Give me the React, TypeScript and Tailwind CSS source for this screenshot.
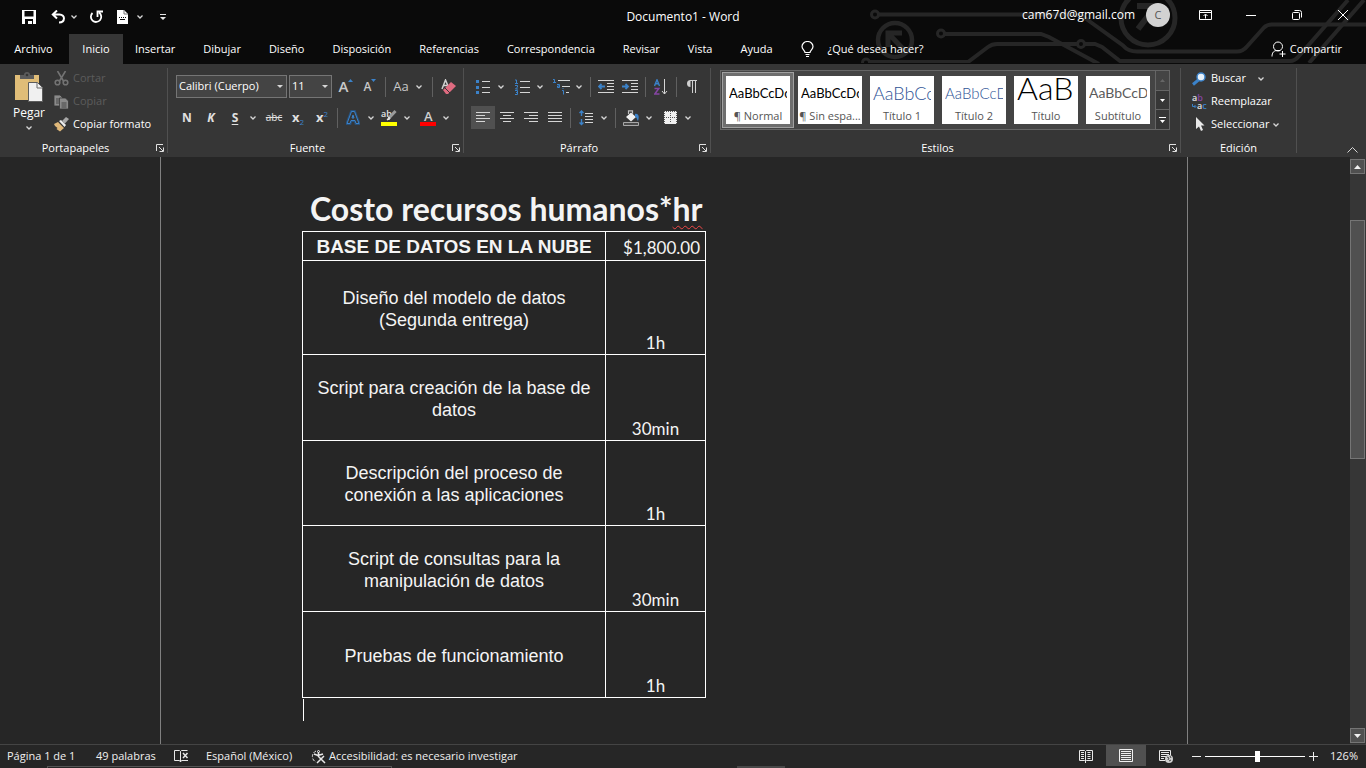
import type { ReactNode } from 'react';
import clsx from 'clsx';

const BLUE = '#3b82c9';
const LIGHT = '#e4e4e4';

interface ToolButtonProps {
  label: string;
  active?: boolean;
  className?: string;
  children: ReactNode;
}

function ToolButton({ label, active, className, children }: ToolButtonProps) {
  return (
    <button
      type="button"
      aria-label={label}
      className={clsx(
        'flex h-[23px] w-6 shrink-0 items-center justify-center hover:bg-[#505050]',
        active && 'bg-[#505050]',
        className,
      )}
    >
      {children}
    </button>
  );
}

function Chevron() {
  return (
    <svg width="6" height="4" viewBox="0 0 6 4" fill="none" stroke="#d6d6d6" strokeWidth="1.300" aria-hidden="true">
      <path d="M.5.5L3 3 5.500.5" />
    </svg>
  );
}

function MenuArrow({ label }: { label: string }) {
  return (
    <button type="button" aria-label={label} className="flex h-[23px] w-3 shrink-0 items-center justify-center">
      <Chevron />
    </button>
  );
}

function Separator() {
  return <span className="mx-[3px] h-5 w-px shrink-0 bg-[#606060]" />;
}

interface GroupProps {
  title: string;
  launcher?: boolean;
  className?: string;
  children: ReactNode;
}

function RibbonGroup({ title, launcher, className, children }: GroupProps) {
  return (
    <section className="flex shrink-0" aria-label={title}>
      <div className={clsx('flex flex-col', className)}>
        <div className="grow">{children}</div>
        <div className="flex h-[18px] items-center">
          <span className="grow text-center leading-[18px]">{title}</span>
          {launcher ? (
            <button type="button" aria-label={`Opciones de ${title}`} className="flex w-4 justify-start pl-[5px]">
              <svg width="8" height="8" viewBox="0 0 8 8" fill="none" stroke="#e0e0e0" aria-hidden="true">
                <path d="M.5 7V.5H7M3 3l4 4M7.500 3.500v4h-4" />
              </svg>
            </button>
          ) : null}
        </div>
      </div>
      <span className="mb-1 mt-1 w-px bg-[#505050]" />
    </section>
  );
}

function HeaderArt() {
  return (
    <svg
      className="pointer-events-none absolute right-0 top-0"
      width="516"
      height="63"
      viewBox="850 0 516 63"
      fill="none"
      stroke="#262626"
      strokeWidth="4"
      aria-hidden="true"
    >
      <circle cx="875" cy="14.500" r="3.500" strokeWidth="3" />
      <path d="M879 14.500h194q8 0 14 5l36 26q5 6 14 6h100q6 0 10-5l17-19q3-3 8-3h94" />
      <circle cx="941" cy="33.500" r="3.500" strokeWidth="3" />
      <path d="M945 34h96l8 3 50 27" />
      <circle cx="866" cy="62.500" r="3.500" strokeWidth="3" />
      <path d="M870 62h98l20-15q4-3 9-3h80" />
      <circle cx="1081" cy="44" r="3.500" strokeWidth="3" />
      <path d="M1085 44h10l7 3 18 14h170q5 0 9-5l49-56M1309 63l55-63" />
      <circle cx="895" cy="40" r="17" strokeWidth="4.500" />
      <path d="M888 47V33h14M888 33l18 19" strokeWidth="5" />
      <circle cx="1148" cy="18" r="27" strokeWidth="5" />
      <path d="M1137 6h19v18M1155 7l-17 22" strokeWidth="6" />
    </svg>
  );
}

function TitleBar() {
  return (
    <div className="relative grid h-[34px] grid-cols-[1fr_auto_1fr] items-start text-white">
      <div className="flex h-[34px] items-center pl-[17px]">
        <button type="button" aria-label="Guardar" className="flex w-6 justify-center">
          <svg width="14" height="14" viewBox="0 0 14 14" aria-hidden="true">
            <path d="M0 0h14v14H0z" fill="#fff" />
            <path d="M2.500 1h9v5.500h-9zM3 9h8v5h-1v-3H6v3H3z" fill="#0a0a0a" />
          </svg>
        </button>
        <button type="button" aria-label="Deshacer" className="ml-[7px] flex w-5 justify-center">
          <svg width="15" height="14" viewBox="0 0 15 14" fill="none" stroke="#fff" strokeWidth="2" aria-hidden="true">
            <path d="M6 .5L1.800 4.500 6 8.500M2 4.500h6.500c6 0 6 8-.500 8" />
          </svg>
        </button>
        <MenuArrow label="Más deshacer" />
        <button type="button" aria-label="Repetir" className="ml-1 flex w-6 justify-center">
          <svg width="14" height="14" viewBox="0 0 14 14" fill="none" stroke="#fff" strokeWidth="1.800" aria-hidden="true">
            <path d="M3.500 3a5.200 5.200 0 1 0 6.500-.500M8.500 7V1.500H14" />
          </svg>
        </button>
        <button type="button" aria-label="Documento" className="ml-1 flex w-5 justify-center">
          <svg width="11" height="14" viewBox="0 0 11 14" aria-hidden="true">
            <path d="M0 0h7l4 4v10H0z" fill="#fff" />
            <path d="M7 0v4h4" fill="none" stroke="#777" />
            <path d="M2 7.500h1m1 0h1m1 0h1m1 0h1M3 9.500h5" stroke="#0a0a0a" />
          </svg>
        </button>
        <span className="ml-[2px]">
          <MenuArrow label="Más documento" />
        </span>
        <button type="button" aria-label="Personalizar barra" className="ml-[5px] flex w-6 justify-center">
          <svg width="6" height="6" viewBox="0 0 6 6" aria-hidden="true">
            <path d="M0 0h6v1H0zM0 3h6L3 6z" fill="#e4e4e4" />
          </svg>
        </button>
      </div>
      <h1 className="whitespace-pre text-xs font-normal leading-[34px]">Documento1 - Word</h1>
      <div className="flex h-[30px] items-center justify-end">
        <span className="text-xs font-normal">cam67d@gmail.com</span>
        <button
          type="button"
          aria-label="Cuenta"
          className="ml-[11px] mr-3 flex size-6 items-center justify-center rounded-full bg-[#d2d2d2] text-[#555]"
        >
          C
        </button>
        <button type="button" aria-label="Presentación de la cinta" className="flex h-full w-[46px] items-center justify-center">
          <svg width="13" height="10" viewBox="0 0 13 10" fill="none" stroke="#fff" aria-hidden="true">
            <path d="M.5.5h12v9H.5zM.5 2.500h12M6.500 8.500v-4M4.500 6l2-2 2 2" />
          </svg>
        </button>
        <button type="button" aria-label="Minimizar" className="flex h-full w-[46px] items-center justify-center">
          <svg width="10" height="1" aria-hidden="true">
            <path d="M0 0h10v1H0z" fill="#fff" />
          </svg>
        </button>
        <button type="button" aria-label="Restaurar" className="flex h-full w-[46px] items-center justify-center">
          <svg width="10" height="10" viewBox="0 0 10 10" fill="none" stroke="#fff" aria-hidden="true">
            <rect x=".5" y="2.500" width="7" height="7" rx="1" />
            <path d="M2.500.5h5q2 0 2 2v5" />
          </svg>
        </button>
        <button type="button" aria-label="Cerrar" className="flex h-full w-[46px] items-center justify-center">
          <svg width="10" height="10" viewBox="0 0 10 10" fill="none" stroke="#fff" aria-hidden="true">
            <path d="M0 0l10 10M10 0L0 10" />
          </svg>
        </button>
      </div>
    </div>
  );
}

const tabs = [
  'Insertar',
  'Dibujar',
  'Diseño',
  'Disposición',
  'Referencias',
  'Correspondencia',
  'Revisar',
  'Vista',
  'Ayuda',
];

function TabBar() {
  return (
    <nav className="relative flex h-[30px] items-stretch text-white" aria-label="Cinta">
      <button type="button" className="w-[69px] pr-[2px]">
        Archivo
      </button>
      <button type="button" className="w-[54px] bg-[#363636] pt-px">
        Inicio
      </button>
      <div className="flex">
        {tabs.map((tab) => (
          <button key={tab} type="button" className="px-[14px] pt-px first:pl-3">
            {tab}
          </button>
        ))}
      </div>
      <button type="button" className="ml-[14px] flex items-center gap-[14px]">
        <svg width="13" height="17" viewBox="0 0 13 17" fill="none" stroke="#fff" strokeWidth="1.200" aria-hidden="true">
          <path d="M4 11.500c0-2-3-3-3-6a5.500 5 0 0 1 11 0c0 3-3 4-3 6zM4.500 13.500h4M5 15.500h3" />
        </svg>
        <span>¿Qué desea hacer?</span>
      </button>
      <button type="button" className="ml-auto mr-6 flex items-center gap-1">
        <svg width="15" height="17" viewBox="0 0 15 17" fill="none" stroke="#fff" aria-hidden="true">
          <circle cx="7" cy="5.500" r="4.500" />
          <path d="M1 15.500c0-4 2-6 5-6h3M11.500 10v6M8.500 13h6" />
        </svg>
        Compartir
      </button>
    </nav>
  );
}

function ClipboardGroup() {
  return (
    <RibbonGroup title="Portapapeles" launcher className="w-[167px]">
      <div className="flex">
        <button type="button" className="ml-1 flex w-[50px] flex-col items-center pt-2">
          <svg width="28" height="30" viewBox="0 0 28 30" aria-hidden="true">
            <path d="M0 3h24v25H0z" fill="#e0bd78" />
            <path d="M5 3h4a3 3 0 0 1 6 0h4v4H5z" fill="#5c5c5c" />
            <circle cx="12" cy="3" r="1.300" fill="#363636" />
            <path d="M13.500 10.500h9l5 5v14h-14z" fill="#f0f0f0" stroke="#5c5c5c" />
            <path d="M22 11v5h5" fill="none" stroke="#6a6a6a" />
          </svg>
          <span className="mt-[3px] text-xs leading-4">Pegar</span>
          <span className="mt-[5px]">
            <Chevron />
          </span>
        </button>
        <div className="flex flex-col pt-[3px]">
          <button type="button" disabled className="flex h-[23px] items-center gap-1 text-[#5c5c5c]">
            <svg width="15" height="15" viewBox="0 0 15 15" fill="none" stroke="#737373" strokeWidth="1.600" aria-hidden="true">
              <path d="M3.500 0l6 10M11.500 0l-6 10" />
              <circle cx="3.500" cy="11.500" r="2.300" />
              <circle cx="11.500" cy="11.500" r="2.300" />
            </svg>
            Cortar
          </button>
          <button type="button" disabled className="flex h-[23px] items-center gap-1 text-[#5c5c5c]">
            <svg width="15" height="14" viewBox="0 0 15 14" fill="#8a8a8a" stroke="#363636" strokeWidth=".8" aria-hidden="true">
              <path d="M0 0h6l3 3v8H0z" />
              <path d="M5.500 3h6l3 3v8h-9z" />
              <path d="M2 4h3M2 6h3M2 8h3M7.500 8h5M7.500 10h5M7.500 12h5" />
            </svg>
            Copiar
          </button>
          <button type="button" className="flex h-[23px] items-center gap-1">
            <svg width="15" height="15" viewBox="0 0 15 15" aria-hidden="true">
              <path d="M0 7l4-2 6 6-4 3.500L2.500 12l1-1L1 9z" fill="#e0b87a" />
              <path d="M5 4l2-1 5 5-1.500 2z" fill="#efefef" />
              <path d="M8 4l4-4 3 2-4.500 5z" fill="#a8a8a8" />
            </svg>
            Copiar formato
          </button>
        </div>
      </div>
    </RibbonGroup>
  );
}

function Combo({ label, value, className }: { label: string; value: string; className: string }) {
  return (
    <span className={clsx('relative flex h-[23px] items-center', className)}>
      <select
        aria-label={label}
        defaultValue={value}
        className="h-full w-full appearance-none border border-[#757575] bg-[#444] pl-[2px] text-[11px] text-white"
      >
        <option>{value}</option>
      </select>
      <svg className="pointer-events-none absolute right-1" width="6" height="3" viewBox="0 0 6 3" aria-hidden="true">
        <path d="M0 0h6L3 3z" fill="#d6d6d6" />
      </svg>
    </span>
  );
}

function FontGroup() {
  return (
    <RibbonGroup title="Fuente" launcher className="w-[295px]">
      <div className="mt-[11px] flex items-center gap-[2px] pl-2">
        <Combo label="Fuente" value="Calibri (Cuerpo)" className="w-[111px]" />
        <Combo label="Tamaño" value="11" className="w-[43px]" />
        <div className="flex items-center">
          <ToolButton label="Aumentar tamaño">
            <span className="text-[15px] font-semibold leading-none text-[#c8c8c8]">A</span>
            <svg className="mb-3" width="5" height="3" aria-hidden="true">
              <path d="M0 3h5L2.500 0z" fill={BLUE} />
            </svg>
          </ToolButton>
          <ToolButton label="Reducir tamaño">
            <span className="text-xs font-semibold leading-none text-[#c8c8c8]">A</span>
            <svg className="mb-3" width="5" height="3" aria-hidden="true">
              <path d="M0 0h5L2.500 3z" fill={BLUE} />
            </svg>
          </ToolButton>
          <Separator />
          <ToolButton label="Cambiar mayúsculas">
            <span className="text-[13px] text-[#c8c8c8]">Aa</span>
          </ToolButton>
          <MenuArrow label="Opciones de mayúsculas" />
          <span className="w-1" />
          <Separator />
          <ToolButton label="Borrar formato">
            <svg width="15" height="16" viewBox="0 0 15 16" fill="none" aria-hidden="true">
              <path d="M1 10L4.500 1 7 7M2.500 6.500h4" stroke="#d0d0d0" strokeWidth="1.500" />
              <path d="M2 11l8-8 5 4-8 8H5z" fill="#df6b80" />
              <path d="M4 9l5 5" stroke="#363636" />
            </svg>
          </ToolButton>
        </div>
      </div>
      <div className="mt-2 flex items-center pl-[7px] text-[#e0e0e0]">
        <ToolButton label="Negrita">
          <b className="text-xs">N</b>
        </ToolButton>
        <ToolButton label="Cursiva">
          <b className="text-xs italic">K</b>
        </ToolButton>
        <ToolButton label="Subrayado">
          <b className="text-xs underline underline-offset-2">S</b>
        </ToolButton>
        <MenuArrow label="Tipos de subrayado" />
        <ToolButton label="Tachado" className="ml-[3px]">
          <span className="text-[10px] line-through">abc</span>
        </ToolButton>
        <ToolButton label="Subíndice">
          <b className="text-[13px]">x</b>
          <span className="mt-2 text-[8px] leading-none text-[#3b82c9]">2</span>
        </ToolButton>
        <ToolButton label="Superíndice">
          <b className="text-[13px]">x</b>
          <span className="mb-2 text-[8px] leading-none text-[#3b82c9]">2</span>
        </ToolButton>
        <Separator />
        <ToolButton label="Efectos de texto">
          <svg width="14" height="15" viewBox="0 0 14 15" fill="none" aria-hidden="true">
            <path d="M1 13.500L5.500 1.500h3l4.500 12h-3L9 10.500H5l-1 3zM6 8h2L7 5z" stroke="#274f78" strokeWidth="3" />
            <path d="M1 13.500L5.500 1.500h3l4.500 12h-3L9 10.500H5l-1 3zM6 8h2L7 5z" fill="#363636" stroke={BLUE} />
          </svg>
        </ToolButton>
        <MenuArrow label="Opciones de efectos" />
        <ToolButton label="Resaltado">
          <svg className="overflow-visible" width="16" height="17" viewBox="0 0 16 17" fill="none" aria-hidden="true">
            <text x="0" y="8" fontSize="9" fontWeight="600" fill="#e4e4e4">
              ab
            </text>
            <path d="M14.500 2L8 9" stroke="#9a9a9a" strokeWidth="3" />
            <path d="M8 8l-2 3 3-1z" fill="#e4e4e4" stroke="#e4e4e4" />
            <path d="M0 13h16v4H0z" fill="#ffff00" />
          </svg>
        </ToolButton>
        <MenuArrow label="Colores de resaltado" />
        <ToolButton label="Color de fuente" className="ml-[3px]">
          <svg className="overflow-visible" width="16" height="16" viewBox="0 0 16 16" aria-hidden="true">
            <text x="4" y="11" fontSize="13" fontWeight="600" fill="#d0d0d0">
              A
            </text>
            <path d="M0 12h16v4H0z" fill="#ff0000" />
          </svg>
        </ToolButton>
        <MenuArrow label="Colores de fuente" />
      </div>
    </RibbonGroup>
  );
}

function AlignIcon({ d }: { d: string }) {
  return (
    <svg width="14" height="11" viewBox="0 0 14 11" stroke="#d6d6d6" aria-hidden="true">
      <path d={d} />
    </svg>
  );
}

function IndentIcon({ arrow }: { arrow: string }) {
  return (
    <svg width="16" height="13" viewBox="0 0 16 13" fill="none" stroke="#d6d6d6" aria-hidden="true">
      <path d="M0 .5h16M9 3.500h7M9 6.500h7M9 9.500h7M0 12.500h16" />
      <path d={arrow} stroke={BLUE} strokeWidth="1.800" />
    </svg>
  );
}

function ParagraphGroup() {
  return (
    <RibbonGroup title="Párrafo" launcher className="w-[246px]">
      <div className="mt-[11px] flex items-center pl-[7px]">
        <ToolButton label="Viñetas">
          <svg width="14" height="14" viewBox="0 0 14 14" aria-hidden="true">
            <path d="M6 1.500h8M6 7.500h8M6 12.500h8" stroke="#d6d6d6" />
            <path d="M0 0h3v3H0zM0 6h3v3H0zM0 11h3v3H0z" fill={BLUE} />
          </svg>
        </ToolButton>
        <MenuArrow label="Tipos de viñeta" />
        <ToolButton label="Numeración" className="ml-[3px]">
          <svg width="15" height="16" viewBox="0 0 15 16" fill="none" aria-hidden="true">
            <path d="M5 2.500h10M5 8.500h10M5 13.500h10" stroke="#d6d6d6" />
            <path d="M0 1h1.500v3.500M0 4.500h3M0 6.500h2.500v1.500L.5 10H3M0 11.500h2.500v4H0M1 13.500h1.500" stroke={BLUE} />
          </svg>
        </ToolButton>
        <MenuArrow label="Tipos de numeración" />
        <ToolButton label="Lista multinivel" className="ml-[3px]">
          <svg width="17" height="16" viewBox="0 0 17 16" fill="none" aria-hidden="true">
            <path d="M5 1.500h12M9 7.500h8M13 13.500h3" stroke="#d6d6d6" />
            <path d="M0 .5h1.500v3M0 3.500h3M4 5.500h2.500v3H4.500v-1.500h2M9 11.500h1.500v4M10 9v1" stroke={BLUE} />
          </svg>
        </ToolButton>
        <MenuArrow label="Tipos de lista" />
        <span className="w-[2px]" />
        <Separator />
        <ToolButton label="Disminuir sangría">
          <IndentIcon arrow="M7 6.500H1M3.500 4L1 6.500 3.500 9" />
        </ToolButton>
        <ToolButton label="Aumentar sangría">
          <IndentIcon arrow="M0 6.500h6M3.500 4L6 6.500 3.500 9" />
        </ToolButton>
        <Separator />
        <ToolButton label="Ordenar">
          <svg width="14" height="16" viewBox="0 0 14 16" fill="none" aria-hidden="true">
            <path d="M.5 7L3 .8 5.500 7M1.500 4.800h3" stroke={BLUE} strokeWidth="1.400" />
            <path d="M.5 9.500h4.300L.8 15h4.700" stroke="#8545a3" strokeWidth="1.500" />
            <path d="M10.500 0v15M8 12l2.500 3 2.500-3" stroke="#d6d6d6" />
          </svg>
        </ToolButton>
        <Separator />
        <ToolButton label="Mostrar todo">
          <svg width="10" height="13" viewBox="0 0 10 13" aria-hidden="true">
            <path d="M3.500 0a3.200 3.200 0 0 0 0 7z" fill="#d0d0d0" />
            <path d="M3 .5h7M5.500 0v13M8.500 0v13" stroke="#d0d0d0" />
          </svg>
        </ToolButton>
      </div>
      <div className="mt-2 flex items-center pl-[7px]">
        <ToolButton label="Alinear a la izquierda" active>
          <AlignIcon d="M0 .5h14M0 3.500h9M0 6.500h14M0 9.500h9" />
        </ToolButton>
        <ToolButton label="Centrar">
          <AlignIcon d="M0 .5h14M3 3.500h8M0 6.500h14M3 9.500h8" />
        </ToolButton>
        <ToolButton label="Alinear a la derecha">
          <AlignIcon d="M0 .5h14M5 3.500h9M0 6.500h14M5 9.500h9" />
        </ToolButton>
        <ToolButton label="Justificar">
          <AlignIcon d="M0 .5h14M0 3.500h14M0 6.500h14M0 9.500h14" />
        </ToolButton>
        <Separator />
        <ToolButton label="Interlineado">
          <svg width="14" height="16" viewBox="0 0 14 16" fill="none" aria-hidden="true">
            <path d="M6 3.500h8M6 6.500h8M6 9.500h8M6 12.500h8" stroke="#d6d6d6" />
            <path d="M2.500 1v5M.5 3l2-2 2 2M2.500 9v6M.5 12.500l2 2 2-2" stroke={BLUE} strokeWidth="1.400" />
          </svg>
        </ToolButton>
        <MenuArrow label="Opciones de interlineado" />
        <span className="w-[2px]" />
        <Separator />
        <ToolButton label="Sombreado">
          <svg width="17" height="16" viewBox="0 0 17 16" fill="none" aria-hidden="true">
            <path d="M3 7l5-4.500L13 7l-5 4.500z" fill="#f0f0f0" />
            <path d="M5.500 4V.8h4v3" stroke="#c0c0c0" strokeWidth="1.200" />
            <path d="M12 4c4-1 4.500 4 3 7-1-1-1-4-3-4z" fill={BLUE} />
            <path d="M.5 12.500h15v3H.5z" fill="#4a4a4a" stroke="#a8a8a8" />
          </svg>
        </ToolButton>
        <MenuArrow label="Colores de sombreado" />
        <ToolButton label="Bordes" className="ml-[3px]">
          <svg width="13" height="13" viewBox="0 0 13 13" aria-hidden="true">
            <path d="M0 0h13v13H0z" fill="#f0f0f0" />
            <path d="M0 .5h13M.5 0v13M12.500 0v13M6.500 0v12M0 6.500h13" stroke="#555" strokeDasharray="1 1" />
          </svg>
        </ToolButton>
        <MenuArrow label="Tipos de borde" />
      </div>
    </RibbonGroup>
  );
}

interface StyleItem {
  name: string;
  sample: string;
  look: string;
}

const styles: StyleItem[] = [
  { name: '¶ Normal', sample: 'AaBbCcDc', look: 'text-[13px] font-normal text-black' },
  { name: '¶ Sin espa...', sample: 'AaBbCcDc', look: 'text-[13px] font-normal text-black' },
  { name: 'Título 1', sample: 'AaBbCc', look: 'text-[18px] font-light text-[#2f5496]' },
  { name: 'Título 2', sample: 'AaBbCcD', look: 'text-[15px] font-light text-[#2f5496]' },
  { name: 'Título', sample: 'AaB', look: 'pb-[11px] text-[32px] font-light text-black' },
  { name: 'Subtítulo', sample: 'AaBbCcD', look: 'text-[14px] font-normal text-[#5a5a5a]' },
];

function StylesGroup() {
  return (
    <RibbonGroup title="Estilos" launcher className="w-[469px]">
      <div className="ml-[9px] mr-[10px] mt-[6px] flex h-[60px] border border-[#666] bg-[#444]">
        <div className="flex grow items-center pl-px">
          {styles.map((style, i) => (
            <button
              key={style.name}
              type="button"
              className={clsx('flex h-[56px] w-[72px] items-center justify-center', i === 0 && 'border border-[#a0a0a0] bg-[#6e6e6e]')}
            >
              <span className="flex h-12 w-16 flex-col bg-white">
                <span
                  className={clsx(
                    'mx-[3px] mt-[2px] flex h-[30px] items-center overflow-hidden font-[Lato,sans-serif] leading-none',
                    style.look,
                  )}
                >
                  {style.sample}
                </span>
                <span className="overflow-hidden whitespace-nowrap leading-4 text-[#555]">{style.name}</span>
              </span>
            </button>
          ))}
        </div>
        <div className="flex w-[14px] flex-col border-l border-[#666]">
          <button type="button" aria-label="Fila anterior" disabled className="flex flex-1 items-center justify-center">
            <svg width="5" height="3" aria-hidden="true">
              <path d="M0 3h5L2.500 0z" fill="#666" />
            </svg>
          </button>
          <button type="button" aria-label="Fila siguiente" className="flex flex-1 items-center justify-center border-y border-[#666] bg-[#363636]">
            <svg width="5" height="3" aria-hidden="true">
              <path d="M0 0h5L2.500 3z" fill="#fff" />
            </svg>
          </button>
          <button type="button" aria-label="Más estilos" className="flex flex-1 items-center justify-center bg-[#363636]">
            <svg width="7" height="6" aria-hidden="true">
              <path d="M0 0h7v1H0zM1 3h5L3.500 6z" fill="#fff" />
            </svg>
          </button>
        </div>
      </div>
    </RibbonGroup>
  );
}

function EditingGroup() {
  return (
    <RibbonGroup title="Edición" className="w-[115px]">
      <div className="flex flex-col items-start pl-[11px] pt-[3px]">
        <button type="button" className="flex h-[23px] items-center gap-1">
          <svg width="15" height="14" viewBox="0 0 15 14" aria-hidden="true">
            <path d="M1 12.500l6-5" stroke={BLUE} strokeWidth="3" />
            <circle cx="9" cy="5" r="4" fill="#e8f1fa" stroke={BLUE} strokeWidth="1.500" />
          </svg>
          Buscar
          <span className="ml-2">
            <Chevron />
          </span>
        </button>
        <button type="button" className="flex h-[23px] items-center gap-1">
          <svg className="overflow-visible" width="15" height="16" viewBox="0 0 15 16" fontWeight="600" aria-hidden="true">
            <text x="0" y="7" fontSize="9" fill={LIGHT}>
              a<tspan fill="#8545a3">b</tspan>
            </text>
            <text x="5" y="15" fontSize="9" fill={LIGHT}>
              a<tspan fill={BLUE}>c</tspan>
            </text>
            <path d="M.5 10v2.500h3M2.500 11l1.500 1.500L2.500 14" fill="none" stroke={BLUE} />
          </svg>
          Reemplazar
        </button>
        <button type="button" className="flex h-[23px] items-center gap-1">
          <svg width="15" height="15" viewBox="0 0 15 15" aria-hidden="true">
            <path d="M4 0v12l3-2.500L9 14l2-1-2-4.500h3.500z" fill="#e8e8e8" />
          </svg>
          Seleccionar
          <Chevron />
        </button>
      </div>
    </RibbonGroup>
  );
}

interface TaskRow {
  task: string;
  time: string;
  height: string;
}

const rows: TaskRow[] = [
  { task: 'Diseño del modelo de datos (Segunda entrega)', time: '1h', height: 'h-[94px]' },
  { task: 'Script para creación de la base de datos', time: '30min', height: 'h-[86px]' },
  { task: 'Descripción del proceso de conexión a las aplicaciones', time: '1h', height: 'h-[85px]' },
  { task: 'Script de consultas para la manipulación de datos', time: '30min', height: 'h-[86px]' },
  { task: 'Pruebas de funcionamiento', time: '1h', height: 'h-[86px]' },
];

function ScrollArrow({ label, d }: { label: string; d: string }) {
  return (
    <button type="button" aria-label={label} className="flex size-[15px] shrink-0 items-center justify-center border border-[#757575] bg-[#505050]">
      <svg width="7" height="4" aria-hidden="true">
        <path d={d} fill="#f0f0f0" />
      </svg>
    </button>
  );
}

function DocumentArea() {
  return (
    <main className="flex min-h-0 grow bg-[#262626]">
      <div className="min-w-0 grow overflow-hidden pr-[2px]">
        <article className="mx-auto h-full max-w-[1028px] border-x border-[#808080] pl-[141px] pt-9 font-normal text-[#f4f4f4]">
          <h2 className="pb-[6px] pl-2 font-[Lato,sans-serif] text-[32px] font-bold leading-[32px]">
            Costo recursos humanos*
            <span className="underline decoration-[#f04848] decoration-wavy decoration-1 underline-offset-4">hr</span>
          </h2>
          <table className="w-[404px] table-fixed border-collapse border border-white text-center font-['Liberation_Sans',Arial,sans-serif] text-[18px] leading-[22px]">
            <colgroup>
              <col className="w-[303px]" />
              <col />
            </colgroup>
            <thead>
              <tr className="h-[29px]">
                <th className="border border-white pt-px text-[19px] font-bold">BASE DE DATOS EN LA NUBE</th>
                <td className="border border-white pr-[5px] pt-1 text-right font-[Lato,sans-serif] text-[17px]">$1,800.00</td>
              </tr>
            </thead>
            <tbody>
              {rows.map((row) => (
                <tr key={row.task} className={row.height}>
                  <td className="border border-white px-2 pt-[2px]">{row.task}</td>
                  <td className="border border-white align-bottom font-[Lato,sans-serif] text-[17px]">{row.time}</td>
                </tr>
              ))}
            </tbody>
          </table>
          <span className="ml-px mt-px block h-[22px] w-px bg-white" />
        </article>
      </div>
      <div className="flex w-4 shrink-0 flex-col bg-[#363636] pb-px pt-[2px]">
        <ScrollArrow label="Desplazar arriba" d="M0 4h7L3.500 0z" />
        <div className="flex grow flex-col pt-[46px]">
          <div className="h-[47%] w-[15px] border border-[#757575] bg-[#505050]" />
        </div>
        <ScrollArrow label="Desplazar abajo" d="M0 0h7L3.500 4z" />
      </div>
    </main>
  );
}

function StatusBar() {
  return (
    <footer className="relative flex h-6 shrink-0 items-center border-t border-[#444] bg-[#262626] text-[#f0f0f0]">
      <span className="w-[89px] pl-[7px]">Página 1 de 1</span>
      <span className="w-[78px] pl-[7px]">49 palabras</span>
      <button type="button" aria-label="Revisión" className="ml-[7px] w-8">
        <svg width="15" height="13" viewBox="0 0 15 13" fill="none" stroke="#e8e8e8" aria-hidden="true">
          <path d="M6.500 12V1.500L5.500.5h-5v10h5zM6.500 12l1-1.500h6.500M6.500 1.500l1-1h6" />
          <path d="M9 3l4.500 5M13.500 3L9 8" strokeWidth="1.500" />
        </svg>
      </button>
      <button type="button" className="w-[104px] text-left">
        Español (México)
      </button>
      <button type="button" className="flex items-center gap-[3px]">
        <svg width="16" height="14" viewBox="0 0 16 14" fill="none" stroke="#e8e8e8" aria-hidden="true">
          <path d="M6 1a6 6 0 0 0 0 11" strokeDasharray="3 1.500" />
          <path d="M4 4l4 1.500 5-1.500M8.500 2v4" strokeWidth="1.500" />
          <path d="M8 6l7 7M14 6l-7 7" strokeWidth="1.500" />
          <circle cx="8.500" cy="1.500" r="1" />
        </svg>
        Accesibilidad: es necesario investigar
      </button>
      <div className="ml-auto flex h-full items-center">
        <button type="button" aria-label="Modo de lectura" className="flex h-[21px] w-10 items-center justify-center">
          <svg width="14" height="13" viewBox="0 0 14 13" fill="none" stroke="#e8e8e8" aria-hidden="true">
            <path d="M6.500 1.500L5.500.5h-5v10h5l1 1 1-1h6V.5h-6zM6.500 1.500V13" />
            <path d="M2 2.500h3M2 4.500h3M2 6.500h3M2 8.500h3M8.500 2.500h3M8.500 4.500h3M8.500 6.500h3M8.500 8.500h3" />
          </svg>
        </button>
        <button type="button" aria-label="Diseño de impresión" className="mb-[2px] flex h-[21px] w-10 items-center justify-center bg-[#505050]">
          <svg width="14" height="13" viewBox="0 0 14 13" fill="none" stroke="#f0f0f0" aria-hidden="true">
            <path d="M.5.5h13v12H.5zM2 2.500h10M2 4.500h10M2 6.500h10M2 8.500h10M2 10.500h10" />
          </svg>
        </button>
        <button type="button" aria-label="Diseño web" className="flex h-[21px] w-10 items-center justify-center">
          <svg width="14" height="13" viewBox="0 0 14 13" fill="none" stroke="#e8e8e8" aria-hidden="true">
            <path d="M6 10.500H.5V.5h11v5M2 2.500h8M2 4.500h8M2 6.500h5M2 8.500h3" />
            <circle cx="10" cy="9" r="4" fill="#d0d0d0" stroke="none" />
            <path d="M8 7l2 1-1 2M11 6l1 2M10 11l2-1" stroke="#444" />
          </svg>
        </button>
        <button type="button" aria-label="Alejar" className="ml-[2px] flex w-4 justify-center">
          <svg width="9" height="9" stroke="#f0f0f0" aria-hidden="true">
            <path d="M0 4.500h9" />
          </svg>
        </button>
        <input
          type="range"
          aria-label="Zoom"
          min={0}
          max={100}
          defaultValue={53}
          className="ml-px h-3 w-[100px] appearance-none bg-transparent [&::-webkit-slider-runnable-track]:h-px [&::-webkit-slider-runnable-track]:bg-white [&::-webkit-slider-thumb]:-mt-[5px] [&::-webkit-slider-thumb]:h-[11px] [&::-webkit-slider-thumb]:w-[5px] [&::-webkit-slider-thumb]:appearance-none [&::-webkit-slider-thumb]:bg-white"
        />
        <button type="button" aria-label="Acercar" className="flex w-4 justify-center">
          <svg width="9" height="9" stroke="#f0f0f0" aria-hidden="true">
            <path d="M0 4.500h9M4.500 0v9" />
          </svg>
        </button>
        <span className="w-[45px] pr-2 text-right">126%</span>
      </div>
      <span className="absolute bottom-0 left-[47px] h-[2px] w-[345px] border border-b-0 border-[#555]" />
      <span className="absolute bottom-0 left-[737px] h-[2px] w-12 bg-[#484848]" />
    </footer>
  );
}

export default function App() {
  return (
    <div className="flex h-screen flex-col overflow-hidden bg-[#262626] font-['Open_Sans','Noto_Sans',sans-serif] text-[11px] font-medium text-white">
      <header className="relative shrink-0 bg-[#0a0a0a]">
        <HeaderArt />
        <TitleBar />
        <TabBar />
      </header>
      <div className="flex h-[93px] shrink-0 bg-[#363636]">
        <ClipboardGroup />
        <FontGroup />
        <ParagraphGroup />
        <StylesGroup />
        <EditingGroup />
        <button type="button" aria-label="Contraer la cinta" className="mb-1 ml-auto mr-2 self-end">
          <svg width="11" height="6" viewBox="0 0 11 6" fill="none" stroke="#d6d6d6" aria-hidden="true">
            <path d="M.5 5.500l5-5 5 5" />
          </svg>
        </button>
      </div>
      <DocumentArea />
      <StatusBar />
    </div>
  );
}
